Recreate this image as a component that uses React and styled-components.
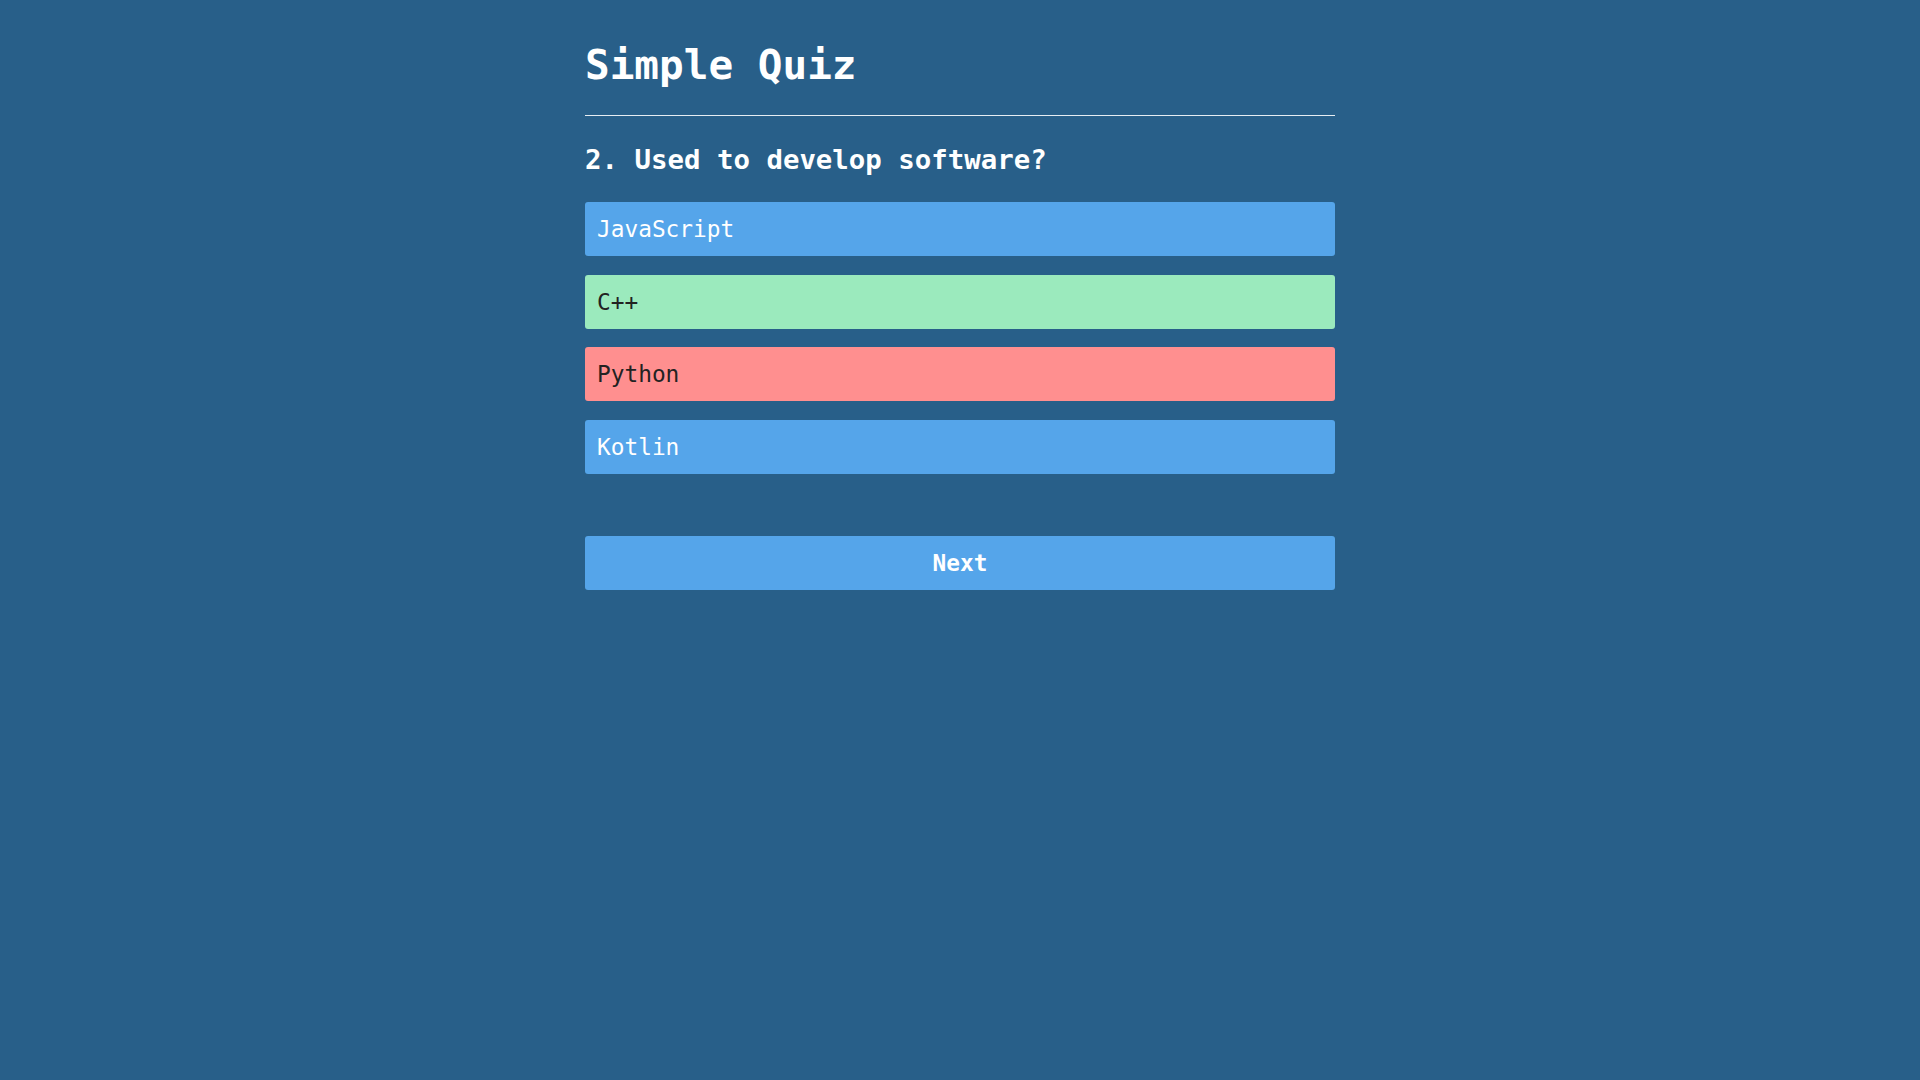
import React, { useState } from 'react'
import styled, { createGlobalStyle } from 'styled-components'

const GlobalStyle = createGlobalStyle`
  html, body {
    margin: 0;
    padding: 0;
    background: #285f89;
    min-height: 100%;
  }
  body {
    font-family: "DejaVu Sans Mono", "Liberation Mono", monospace;
    color: #ffffff;
  }
`;

const Page = styled.div`
  min-height: 1080px;
  background: #285f89;
`;

const Quiz = styled.main`
  width: 750px;
  margin: 0 auto;
  display: flex;
  flex-direction: column;
`;

const Title = styled.h1`
  margin: 0;
  padding: 41px 0 25px;
  font-size: 41px;
  line-height: 1.2;
  font-weight: 600;
  border-bottom: 1px solid #e6edf3;
`;

const Question = styled.h2`
  margin: 28px 0 25px;
  font-size: 27.4px;
  line-height: 1.2;
  font-weight: 700;
`;

const Answers = styled.div`
  display: flex;
  flex-direction: column;
  gap: 18.5px;
`;

const answerColors = {
  idle: { bg: '#55a5ea', fg: '#ffffff' },
  correct: { bg: '#9beabd', fg: '#222222' },
  wrong: { bg: '#ff8f8f', fg: '#222222' },
};

const AnswerButton = styled.button`
  height: 54px;
  padding: 0 12px;
  border: none;
  border-radius: 3px;
  background: ${p => answerColors[p.$state].bg};
  color: ${p => answerColors[p.$state].fg};
  font-family: inherit;
  font-size: 22.8px;
  text-align: left;
  display: flex;
  align-items: center;
  cursor: pointer;
`;

const NextButton = styled.button`
  margin-top: 62px;
  height: 54px;
  border: none;
  border-radius: 3px;
  background: #55a5ea;
  color: #ffffff;
  font-family: inherit;
  font-size: 22.8px;
  font-weight: 700;
  cursor: pointer;
`;

const answers = [
  { text: 'JavaScript', state: 'idle' },
  { text: 'C++', state: 'correct' },
  { text: 'Python', state: 'wrong' },
  { text: 'Kotlin', state: 'idle' },
];

const App = () => {
  const [list] = useState(answers);

  return (
    <Page>
      <GlobalStyle />
      <Quiz>
        <Title>Simple Quiz</Title>
        <Question>2. Used to develop software?</Question>
        <Answers>
          {list.map(a => (
            <AnswerButton key={a.text} $state={a.state}>{a.text}</AnswerButton>
          ))}
        </Answers>
        <NextButton>Next</NextButton>
      </Quiz>
    </Page>
  );
};

export default App;
